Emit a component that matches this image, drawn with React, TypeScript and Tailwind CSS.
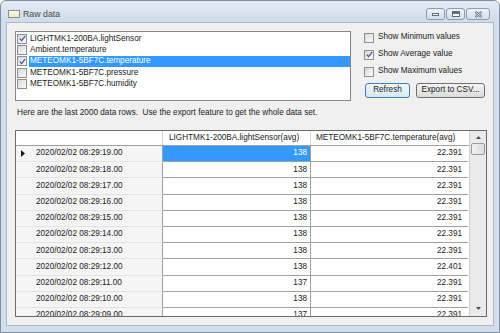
const sensors = [
  { name: "LIGHTMK1-200BA.lightSensor", checked: true },
  { name: "Ambient.temperature", checked: false },
  { name: "METEOMK1-5BF7C.temperature", checked: true, selected: true },
  { name: "METEOMK1-5BF7C.pressure", checked: false },
  { name: "METEOMK1-5BF7C.humidity", checked: false },
];

const rows = [
  ["19", "138", "22.391"],
  ["18", "138", "22.391"],
  ["17", "138", "22.391"],
  ["16", "138", "22.391"],
  ["15", "138", "22.391"],
  ["14", "138", "22.391"],
  ["13", "138", "22.391"],
  ["12", "138", "22.401"],
  ["11", "137", "22.391"],
  ["10", "138", "22.391"],
  ["09", "137", "22.391"],
];

function Check({ checked }: { checked?: boolean }) {
  return (
    <span className="flex h-[10px] w-[10px] shrink-0 items-center justify-center border border-[#8e8f8f] bg-linear-to-br from-[#d8d8d8] to-[#fbfbfb]">
      {checked && (
        <svg viewBox="0 0 8 8" className="h-[7px] w-[7px]">
          <path d="M1 4.2 L3 6.4 L7 1.2" fill="none" stroke="#3c5192" strokeWidth="1.4" />
        </svg>
      )}
    </span>
  );
}

function WinButton({ children, wide }: { children: React.ReactNode; wide?: boolean }) {
  return (
    <div
      className={`flex h-[12px] items-center justify-center rounded-[3px] border border-[#8c9cb0] bg-linear-to-b from-[#eef3f8] to-[#d3deea] ${
        wide ? "w-[24px]" : "w-[19px]"
      }`}
    >
      {children}
    </div>
  );
}

export default function App() {
  return (
    <div className="flex h-[333px] w-[500px] flex-col overflow-hidden rounded-t-[6px] border border-[#7d8da2] bg-[#d2deec] font-['Liberation_Sans',Arial,sans-serif] text-[8.2px] text-[#1a1a1a]">
      {/* title bar */}
      <div className="flex h-[21px] shrink-0 items-start bg-linear-to-b from-[#e3ebf4] to-[#d0dcea] pl-[7px] pr-[9px]">
        <span className="mt-[9px] h-[8px] w-[12px] border border-[#8d8d8d] bg-linear-to-b from-[#fffbe9] to-[#efe6c2]" />
        <span className="ml-[3px] mt-[7px] text-[8.8px] leading-[12px] text-[#4a4a4a]">Raw data</span>
        <div className="ml-auto mt-[7px] flex gap-[1px]">
          <WinButton>
            <span className="h-[3px] w-[7px] border border-[#5d6b7d] bg-white" />
          </WinButton>
          <WinButton>
            <span className="h-[6px] w-[8px] border border-[#5d6b7d] bg-white">
              <span className="block h-[2px] w-full bg-[#5d6b7d]" />
            </span>
          </WinButton>
          <WinButton wide>
            <svg viewBox="0 0 10 8" className="h-[7px] w-[9px]">
              <path d="M1.5 1 L8.5 7 M8.5 1 L1.5 7" stroke="#5d6b7d" strokeWidth="2.4" />
              <path d="M1.5 1 L8.5 7 M8.5 1 L1.5 7" stroke="#ffffff" strokeWidth="0.9" />
            </svg>
          </WinButton>
        </div>
      </div>

      {/* client area */}
      <div className="mx-[5px] mb-[6px] flex min-h-0 flex-1 flex-col border border-[#a9bacd] bg-[#f0f0f0] pb-[8px] pl-[8px] pr-[6px] pt-[8px]">
        <div className="flex items-start">
          {/* checked list box */}
          <div className="h-[70px] w-[336px] shrink-0 border border-[#828790] bg-white pt-[1px]">
            {sensors.map((s) => (
              <div key={s.name} className="flex h-[11.33px] items-center pl-[1px]">
                <Check checked={s.checked} />
                <span
                  className={`ml-[2px] flex h-full flex-1 items-center pl-[1px] ${
                    s.selected ? "bg-[#3399ff] text-white" : ""
                  }`}
                >
                  {s.name}
                </span>
              </div>
            ))}
          </div>

          {/* options */}
          <div className="ml-[13px] mt-[-2px] flex flex-col">
            {["Show Minimum values", "Show Average value", "Show Maximum values"].map((label, i) => (
              <div key={label} className="flex h-[17px] items-center gap-[4px]">
                <Check checked={i === 1} />
                <span>{label}</span>
              </div>
            ))}
            <div className="ml-[1px] mt-[3px] flex gap-[6px]">
              <button className="h-[15px] w-[45px] rounded-[3px] border border-[#3c7fb1] bg-linear-to-b from-[#f2f9fd] to-[#d5eaf6] text-[8.2px] text-[#1a1a1a]">
                Refresh
              </button>
              <button className="h-[15px] w-[69px] rounded-[3px] border border-[#707070] bg-linear-to-b from-[#f4f4f4] to-[#dcdcdc] text-[8.2px] text-[#1a1a1a]">
                Export to CSV...
              </button>
            </div>
          </div>
        </div>

        <div className="ml-[2px] mt-[6px] h-[12px] leading-[12px]">
          Here are the last 2000 data rows.&nbsp; Use the export feature to get the whole data set.
        </div>

        {/* data grid */}
        <div className="mt-[11px] flex min-h-0 flex-1 border border-[#6b6b6b] bg-[#ababab]">
          <div className="flex min-w-0 flex-1 flex-col overflow-hidden bg-white">
            <div className="flex h-[15px] shrink-0 border-b border-[#a0a0a0] bg-white">
              <div className="w-[147px] shrink-0 border-r border-[#d5d5d5]" />
              <div className="flex w-[148px] shrink-0 items-center border-r border-[#d5d5d5] pl-[6px]">
                LIGHTMK1-200BA.lightSensor(avg)
              </div>
              <div className="flex w-[157px] shrink-0 items-center pl-[5px]">
                METEOMK1-5BF7C.temperature(avg)
              </div>
            </div>
            {rows.map(([sec, light, temp], i) => (
              <div key={sec} className="flex h-[16.2px] shrink-0">
                <div className="relative flex w-[147px] shrink-0 items-center border-b border-r border-b-[#e4e4e4] border-r-[#a0a0a0] bg-[#f5f5f5] pl-[20px]">
                  {i === 0 && (
                    <svg viewBox="0 0 4 7" className="absolute left-[5px] h-[7px] w-[4px]">
                      <path d="M0 0 L4 3.5 L0 7 Z" fill="#1a1a1a" />
                    </svg>
                  )}
                  2020/02/02 08:29:{sec}.00
                </div>
                <div
                  className={`flex w-[148px] shrink-0 items-center justify-end border-b border-r border-[#a0a0a0] pr-[3px] ${
                    i === 0 ? "bg-[#3399ff] text-white" : "bg-white"
                  }`}
                >
                  {light}
                </div>
                <div className="flex w-[157px] shrink-0 items-center justify-end border-b border-[#a0a0a0] pr-[6px]">
                  {temp}
                </div>
              </div>
            ))}
          </div>

          {/* vertical scrollbar */}
          <div className="flex w-[17px] shrink-0 flex-col border-l border-[#d0d0d0] bg-[#eaeaea]">
            <div className="flex h-[12px] items-center justify-center">
              <svg viewBox="0 0 5 3" className="h-[3px] w-[5px]">
                <path d="M0 3 L2.5 0 L5 3 Z" fill="#4d4d4d" />
              </svg>
            </div>
            <div className="mx-[1px] h-[12px] rounded-[2px] border border-[#9a9a9a] bg-linear-to-r from-[#f3f3f3] to-[#dcdcdc]" />
            <div className="flex-1" />
            <div className="flex h-[15px] items-center justify-center">
              <svg viewBox="0 0 5 3" className="h-[3px] w-[5px]">
                <path d="M0 0 L2.5 3 L5 0 Z" fill="#4d4d4d" />
              </svg>
            </div>
          </div>
        </div>
      </div>
    </div>
  );
}
